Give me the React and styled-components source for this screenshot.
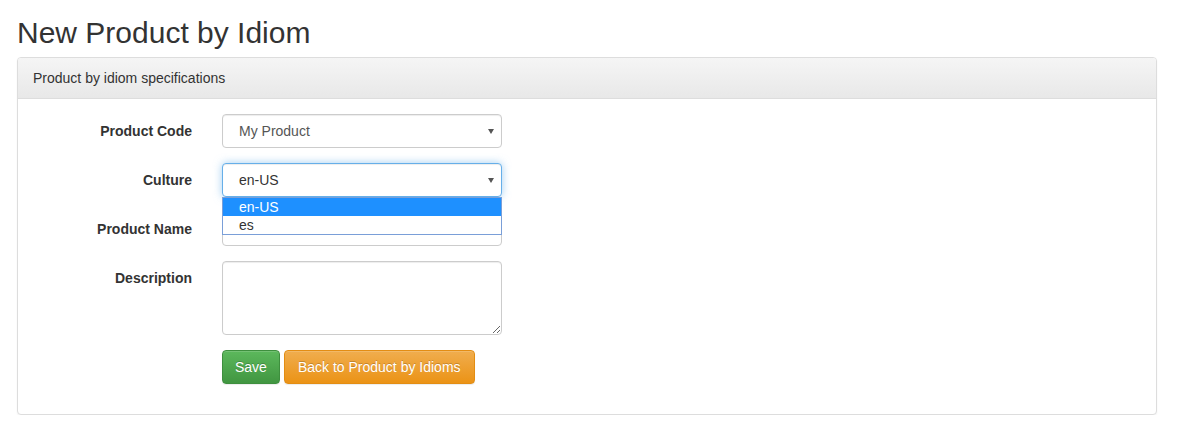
import React from "react";
import styled, { createGlobalStyle } from "styled-components";

const GlobalStyle = createGlobalStyle`
  * {
    box-sizing: border-box;
  }

  body {
    margin: 0;
    font-family: "Liberation Sans", Arial, sans-serif;
    font-size: 14px;
    line-height: 1.42857;
    color: #333;
    background: #fff;
  }
`;

const Page = styled.div`
  padding: 0 20px 0 17px;
`;

const Title = styled.h2`
  margin: 15px 0 9px;
  padding-top: 1px;
  height: 33px;
  font-size: 30px;
  font-weight: 500;
  line-height: 1.1;
  color: #333;
`;

const Panel = styled.div`
  border: 1px solid #ddd;
  border-radius: 4px;
  background: #fff;
  box-shadow: 0 1px 2px rgba(0, 0, 0, 0.05);
`;

const PanelHeading = styled.div`
  padding: 11px 15px 9px;
  border-bottom: 1px solid #ddd;
  border-radius: 3px 3px 0 0;
  background-image: linear-gradient(to bottom, #f5f5f5 0, #e8e8e8 100%);
`;

const PanelBody = styled.div`
  padding: 15px;
`;

const FormGroup = styled.div`
  display: grid;
  grid-template-columns: 189px 1fr;
  margin: 0 -15px 15px;
`;

const Label = styled.label`
  padding: 8px 15px 0;
  font-weight: 700;
  text-align: right;
`;

const Control = styled.div`
  position: relative;
  padding: 0 15px;
`;

const fieldBase = `
  display: block;
  width: 100%;
  max-width: 280px;
  border: 1px solid #ccc;
  border-radius: 4px;
  background: #fff;
  font-family: "Liberation Sans", Arial, sans-serif;
  font-size: 14px;
  line-height: 1.42857;
  color: #555;
  box-shadow: inset 0 1px 1px rgba(0, 0, 0, 0.075);
`;

const SelectBox = styled.div`
  ${fieldBase}
  position: relative;
  height: 34px;
  padding: 7px 12px 5px 16px;
  color: ${props => (props.focused ? "#333" : "#555")};
  border-color: ${props => (props.focused ? "#66afe9" : "#ccc")};
  box-shadow: ${props =>
    props.focused
      ? "inset 0 1px 1px rgba(0,0,0,.075), 0 0 8px rgba(102,175,233,.6)"
      : "inset 0 1px 1px rgba(0,0,0,.075)"};
`;

const Arrow = styled.span`
  position: absolute;
  top: 14px;
  right: 7px;
  width: 0;
  height: 0;
  border-left: 3.5px solid transparent;
  border-right: 3.5px solid transparent;
  border-top: 5px solid #555;
`;

const TextInput = styled.input`
  ${fieldBase}
  height: 34px;
  padding: 6px 12px;
  outline: none;
`;

const TextArea = styled.textarea`
  ${fieldBase}
  height: 74px;
  padding: 6px 12px;
  outline: none;
`;

const OptionList = styled.ul`
  position: absolute;
  top: 34px;
  left: 15px;
  z-index: 10;
  width: 280px;
  margin: 0;
  padding: 0;
  list-style: none;
  border: 1px solid #7a9fd8;
  background: #fff;
`;

const Option = styled.li`
  height: 18px;
  padding-left: 16px;
  font-size: 14px;
  line-height: 18px;
  color: ${props => (props.selected ? "#fff" : "#333")};
  background: ${props => (props.selected ? "#1e90ff" : "#fff")};
`;

const Actions = styled.div`
  display: flex;
  gap: 4px;
`;

const Button = styled.button`
  padding: 7px ${props => props.padX || 12}px 5px;
  border: 1px solid ${props => props.border};
  border-radius: 4px;
  font-family: "Liberation Sans", Arial, sans-serif;
  font-size: 14px;
  line-height: 1.42857;
  color: #fff;
  text-shadow: 0 -1px 0 rgba(0, 0, 0, 0.2);
  background-image: linear-gradient(to bottom, ${props => props.from} 0, ${props => props.to} 100%);
  box-shadow: inset 0 1px 0 rgba(255, 255, 255, 0.15), 0 1px 1px rgba(0, 0, 0, 0.075);
  cursor: pointer;
`;

export default function App() {
  return (
    <Page>
      <GlobalStyle />
      <Title>New Product by Idiom</Title>
      <Panel>
        <PanelHeading>Product by idiom specifications</PanelHeading>
        <PanelBody>
          <FormGroup>
            <Label>Product Code</Label>
            <Control>
              <SelectBox>
                My Product
                <Arrow />
              </SelectBox>
            </Control>
          </FormGroup>
          <FormGroup>
            <Label>Culture</Label>
            <Control>
              <SelectBox focused>
                en-US
                <Arrow />
              </SelectBox>
              <OptionList>
                <Option selected>en-US</Option>
                <Option>es</Option>
              </OptionList>
            </Control>
          </FormGroup>
          <FormGroup>
            <Label>Product Name</Label>
            <Control>
              <TextInput type="text" />
            </Control>
          </FormGroup>
          <FormGroup>
            <Label>Description</Label>
            <Control>
              <TextArea rows={3} />
            </Control>
          </FormGroup>
          <FormGroup>
            <div />
            <Control>
              <Actions>
                <Button from="#5cb85c" to="#419641" border="#3e8f3e">
                  Save
                </Button>
                <Button from="#f0ad4e" to="#eb9316" border="#e38d13" padX={13}>
                  Back to Product by Idioms
                </Button>
              </Actions>
            </Control>
          </FormGroup>
        </PanelBody>
      </Panel>
    </Page>
  );
}
